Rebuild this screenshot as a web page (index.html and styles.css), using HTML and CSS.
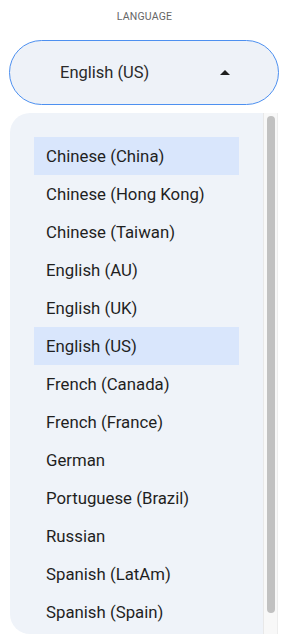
FILE: index.html
```html
<!DOCTYPE html>
<html lang="en">
<head>
    <meta charset="UTF-8">
    <title>Language</title>
    <link rel="stylesheet" href="styles.css">
</head>
<body>
    <div class="field">
        <div class="field-label">LANGUAGE</div>
        <div class="select">
            <span class="select-value">English (US)</span>
            <svg class="select-arrow" width="10" height="5" viewBox="0 0 10 5">
                <path d="M0 5 L5 0 L10 5 Z" fill="#1f1f1f"/>
            </svg>
        </div>
        <div class="dropdown">
            <ul class="options">
                <li class="option selected">Chinese (China)</li>
                <li class="option">Chinese (Hong Kong)</li>
                <li class="option">Chinese (Taiwan)</li>
                <li class="option">English (AU)</li>
                <li class="option">English (UK)</li>
                <li class="option selected">English (US)</li>
                <li class="option">French (Canada)</li>
                <li class="option">French (France)</li>
                <li class="option">German</li>
                <li class="option">Portuguese (Brazil)</li>
                <li class="option">Russian</li>
                <li class="option">Spanish (LatAm)</li>
                <li class="option">Spanish (Spain)</li>
            </ul>
            <div class="scrollbar">
                <div class="scroll-thumb"></div>
            </div>
        </div>
    </div>
</body>
</html>
```

FILE: styles.css
```css
body {
    margin: 0;
    background-color: white;
    font-family: Roboto, "Liberation Sans", sans-serif;
    color: #1f1f1f;
}
.field {
    padding: 11px 16px 0 9px;
}
.field-label {
    text-align: center;
    font-size: 10.5px;
    color: #666;
    letter-spacing: 0.2px;
    line-height: 12px;
    padding-left: 1px;
}
.select {
    box-sizing: border-box;
    margin-top: 17px;
    width: 270px;
    height: 65px;
    display: flex;
    align-items: center;
    justify-content: space-between;
    padding: 0 48px 0 50px;
    background-color: #eef2f8;
    border: 1px solid #4d90f0;
    border-radius: 33px;
}
.select-value {
    font-size: 16.5px;
    color: #2a2a2a;
}
.select-arrow {
    display: block;
}
.dropdown {
    display: flex;
    margin-top: 8px;
    margin-left: 1px;
    height: 521px;
}
.options {
    list-style: none;
    margin: 0;
    width: 253px;
    box-sizing: border-box;
    padding: 24px 24px 0 24px;
    background-color: #eff3f9;
    border-radius: 20px 0 0 20px;
    overflow: hidden;
}
.option {
    height: 38px;
    line-height: 38px;
    padding-left: 12px;
    font-size: 16.8px;
    color: #1f1f1f;
    white-space: nowrap;
}
.option.selected {
    background-color: #d9e6fc;
}
.scrollbar {
    width: 15px;
    box-sizing: border-box;
    background-color: #f8f8f8;
    border-left: 1px solid #e8e8e8;
    border-right: 1px solid #ededed;
    padding: 3px 2px 0 3px;
}
.scroll-thumb {
    height: 497px;
    background-color: #c1c1c1;
    border-radius: 4px;
}
```
